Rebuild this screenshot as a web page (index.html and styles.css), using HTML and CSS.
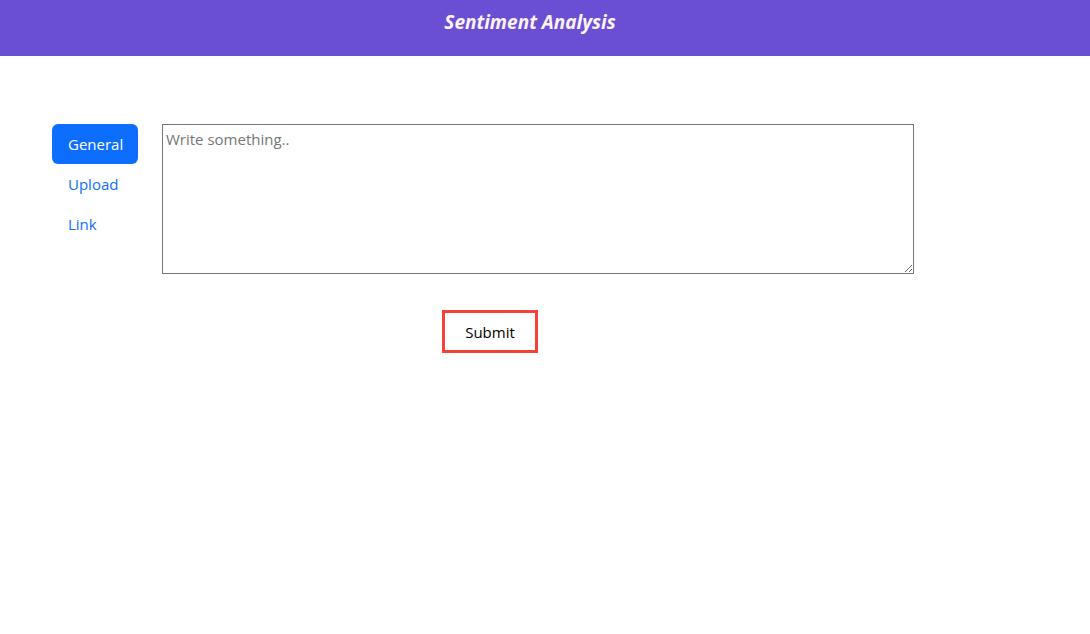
FILE: index.html
```html
<!DOCTYPE html>
<html>
<head>
<meta charset="utf-8">
<link rel="stylesheet" href="styles.css">
</head>
<body>
<header class="topbar">
  <h1 class="title">Sentiment Analysis</h1>
</header>
<main class="content">
  <nav class="tabs">
    <a class="tab active">General</a>
    <a class="tab">Upload</a>
    <a class="tab">Link</a>
  </nav>
  <section class="panel">
    <textarea class="input" placeholder="Write something.."></textarea>
    <div class="actions">
      <button class="submit">Submit</button>
    </div>
  </section>
</main>
</body>
</html>
```
FILE: styles.css
```css
* { box-sizing: border-box; }
body {
  margin: 0;
  font-family: "Open Sans", "Noto Sans", sans-serif;
  background: #fff;
}
.topbar {
  height: 56px;
  background: #6a4fd5;
  display: flex;
  justify-content: center;
  padding-right: 30px;
}
.title {
  margin: 0;
  padding-top: 9px;
  font-size: 19px;
  line-height: 26px;
  font-weight: 700;
  font-style: italic;
  color: #fdf3ee;
}
.content {
  display: flex;
  padding: 68px 0 0 52px;
  gap: 24px;
}
.tabs {
  display: flex;
  flex-direction: column;
  width: 86px;
}
.tab {
  height: 40px;
  line-height: 40px;
  padding-left: 16px;
  font-size: 15px;
  color: #0d6efd;
  border-radius: 6px;
}
.tab.active {
  background: #0d6efd;
  color: #fff;
}
.panel {
  display: flex;
  flex-direction: column;
}
.input {
  width: 752px;
  height: 150px;
  border: 1px solid #767676;
  padding: 4px 3px;
  font-family: "Open Sans", "Noto Sans", sans-serif;
  font-size: 15px;
  resize: vertical;
  margin: 0;
  display: block;
}
.input::placeholder { color: #757575; }
.actions {
  padding-top: 36px;
  padding-left: 280px;
}
.submit {
  width: 96px;
  height: 43px;
  border: 3px solid #f44336;
  background: #fff;
  font-family: "Open Sans", "Noto Sans", sans-serif;
  font-size: 15px;
  color: #000;
  padding: 0;
}
```
